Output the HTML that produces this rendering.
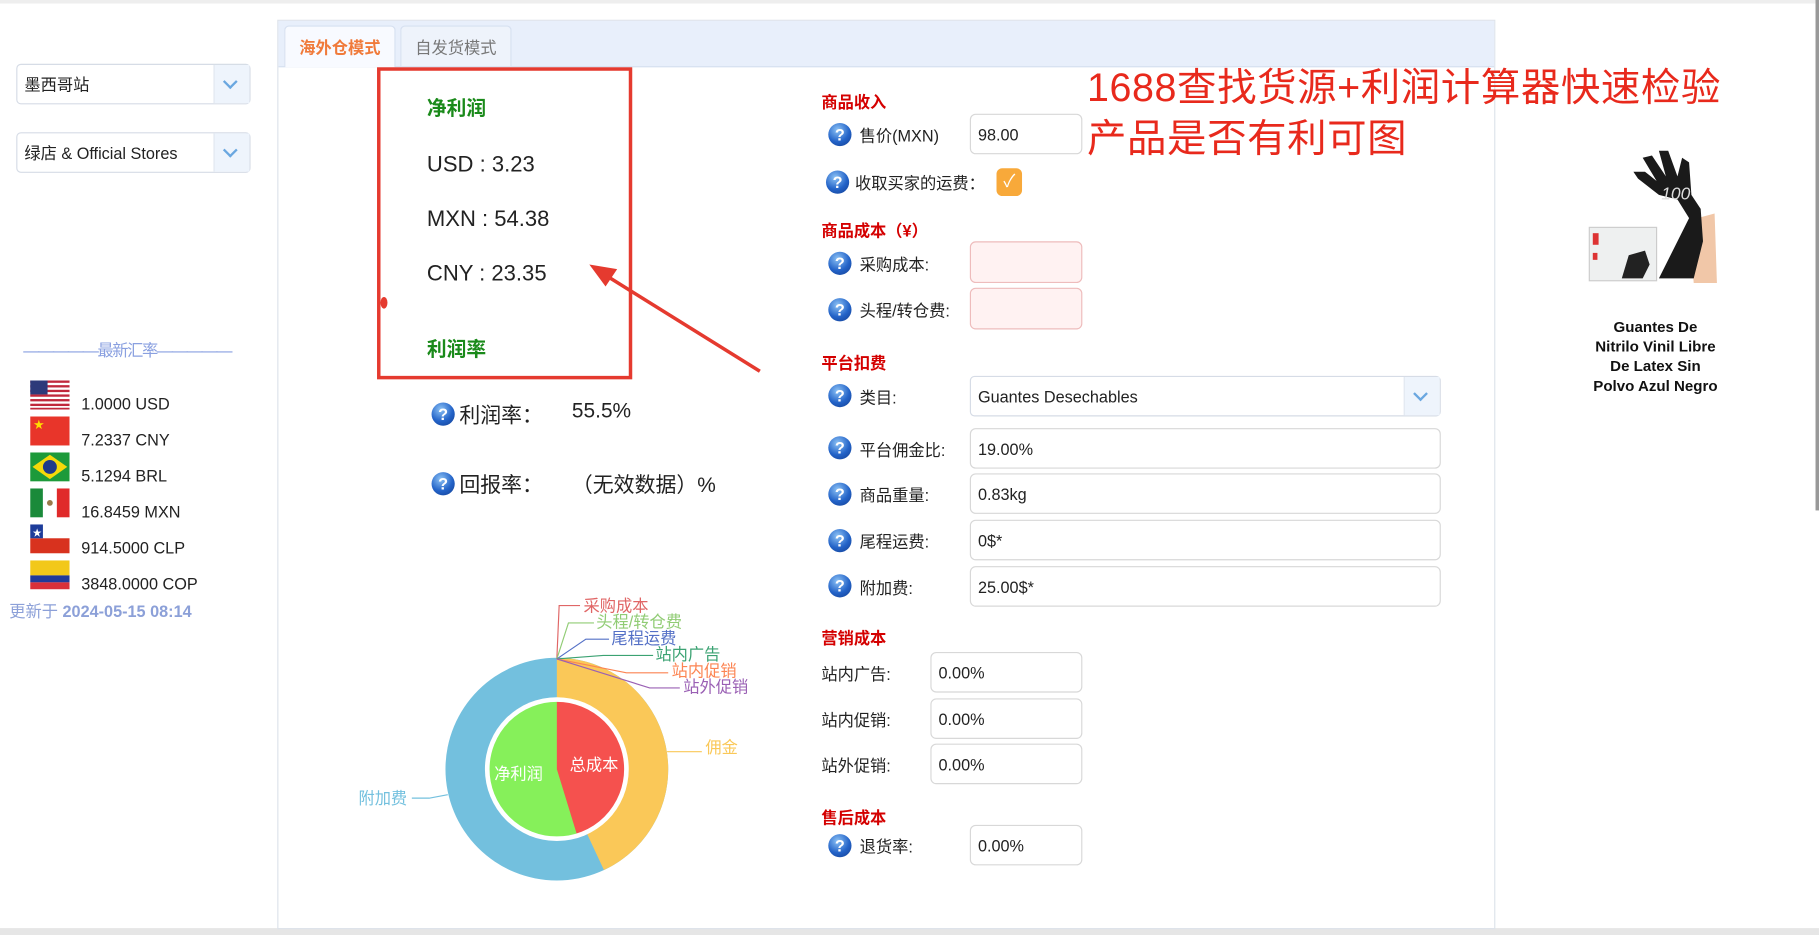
<!DOCTYPE html>
<html><head><meta charset="utf-8">
<style>
html,body{margin:0;padding:0;width:1819px;height:935px;overflow:hidden;background:#fff}
#w{position:absolute;left:0;top:0;width:1568px;height:806px;transform:scale(1.16008);transform-origin:0 0;font-family:"Liberation Sans","Noto Sans CJK SC",sans-serif;color:#222}
.a{position:absolute;white-space:nowrap}
.sel{position:absolute;border:1px solid #d6dce6;border-radius:4px;background:#fff;font-size:14px;box-sizing:border-box}
.sel .t{position:absolute;left:6px;top:50%;transform:translateY(-50%)}
.sel .b{position:absolute;right:0;top:0;bottom:0;width:30px;background:#eef4fc;border-left:1px solid #e2e8f0}
.sel .b:after{content:"";position:absolute;left:9px;top:10px;width:7px;height:7px;border-right:2px solid #6aa7e0;border-bottom:2px solid #6aa7e0;transform:rotate(45deg)}
.inp{position:absolute;border:1px solid #d8d8d8;border-radius:5px;background:#fff;box-sizing:border-box;font-size:14px;padding-left:6px;display:flex;align-items:center}
.pk{background:#fff2f2;border-color:#eebcbc}
.q{position:absolute;width:20px;height:20px;border-radius:50%;background:radial-gradient(circle at 40% 30%,#8cc2f5,#2363c8 55%,#123c8e);color:#fff;font:bold 14px/20px "Liberation Sans",sans-serif;text-align:center}
.h{position:absolute;color:#d40000;font-weight:bold;font-size:14px}
.l{position:absolute;font-size:14px}
.flag{position:absolute;left:26px;width:34px;height:25px}
.r{position:absolute;left:70px;font-size:14px;color:#222}
</style></head><body><div id="w">
<div class="a" style="left:0;top:0;width:1568px;height:3px;background:#eee"></div>
<div class="a" style="left:0;top:800px;width:1568px;height:6px;background:#e6e6e6"></div>
<div class="a" style="left:1565px;top:0;width:3px;height:440px;background:#999"></div>

<div class="sel" style="left:14px;top:55px;width:202px;height:35px"><span class="t">墨西哥站</span><span class="b"></span></div>
<div class="sel" style="left:14px;top:114px;width:202px;height:35px"><span class="t">绿店 &amp; Official Stores</span><span class="b"></span></div>

<div class="a" style="left:20px;top:292px;font-size:14px;color:#8aa0e0;letter-spacing:-1.2px">—————最新汇率—————</div>
<svg class="flag" style="top:328px" viewBox="0 0 34 25"><rect width="34" height="25" fill="#fff"/><g fill="#c0283c"><rect y="0" width="34" height="2"/><rect y="4" width="34" height="2"/><rect y="8" width="34" height="2"/><rect y="12" width="34" height="2"/><rect y="16" width="34" height="2"/><rect y="20" width="34" height="2"/><rect y="23.5" width="34" height="1.5"/></g><rect width="15" height="12" fill="#2d3a7a"/></svg>
<svg class="flag" style="top:359px" viewBox="0 0 34 25"><rect width="34" height="25" fill="#e8352a"/><text x="3" y="10" fill="#ffde00" font-size="9">★</text></svg>
<svg class="flag" style="top:390px" viewBox="0 0 34 25"><rect width="34" height="25" fill="#1d9a3a"/><polygon points="17,2 32,12.5 17,23 2,12.5" fill="#f5d90a"/><circle cx="17" cy="12.5" r="6" fill="#1f3a8a"/></svg>
<svg class="flag" style="top:421px" viewBox="0 0 34 25"><rect width="11" height="25" fill="#1a8a3a"/><rect x="11" width="12" height="25" fill="#fff"/><rect x="23" width="11" height="25" fill="#e02a2a"/><circle cx="17" cy="12.5" r="2.5" fill="#9a7a4a"/></svg>
<svg class="flag" style="top:452px" viewBox="0 0 34 25"><rect width="34" height="12" fill="#fff"/><rect y="12" width="34" height="13" fill="#d8321e"/><rect width="11" height="12" fill="#1d3c9a"/><text x="2" y="10" fill="#fff" font-size="8">★</text></svg>
<svg class="flag" style="top:483px" viewBox="0 0 34 25"><rect width="34" height="13" fill="#f2c81a"/><rect y="13" width="34" height="6" fill="#1f3a9a"/><rect y="19" width="34" height="6" fill="#d8303a"/></svg>
<div class="r" style="top:340px">1.0000 USD</div>
<div class="r" style="top:371px">7.2337 CNY</div>
<div class="r" style="top:402px">5.1294 BRL</div>
<div class="r" style="top:433px">16.8459 MXN</div>
<div class="r" style="top:464px">914.5000 CLP</div>
<div class="r" style="top:495px">3848.0000 COP</div>
<div class="a" style="left:8px;top:517px;font-size:14px;color:#8ca0d8">更新于 <b>2024-05-15 08:14</b></div>

<div class="a" style="left:239px;top:17px;width:1050px;height:784px;border:1px solid #dde3ea;box-sizing:border-box"></div>
<div class="a" style="left:240px;top:18px;width:1048px;height:39px;background:#e8effb;border-bottom:1px solid #d6e0f0"></div>
<div class="a" style="left:245px;top:22px;width:96px;height:36px;background:#f8faff;border:1px solid #d6e0f0;border-bottom:none;border-radius:4px 4px 0 0;box-sizing:border-box;color:#f07a3a;font-size:14px;font-weight:bold;text-align:center;line-height:36px">海外仓模式</div>
<div class="a" style="left:345px;top:22px;width:96px;height:35px;background:#eef3fb;border:1px solid #d6e0f0;border-bottom:none;border-radius:4px 4px 0 0;box-sizing:border-box;color:#777;font-size:14px;text-align:center;line-height:36px">自发货模式</div>

<div class="a" style="left:325px;top:58px;width:220px;height:269px;border:3px solid #e53a2f;box-sizing:border-box"></div>
<div class="a" style="left:368px;top:79px;font-size:17px;font-weight:bold;color:#1a8a1a">净利润</div>
<div class="a" style="left:368px;top:132px;font-size:19px">USD : 3.23</div>
<div class="a" style="left:368px;top:179px;font-size:19px">MXN : 54.38</div>
<div class="a" style="left:368px;top:226px;font-size:19px">CNY : 23.35</div>
<div class="a" style="left:368px;top:287px;font-size:17px;font-weight:bold;color:#1a8a1a">利润率</div>
<div class="a" style="left:328px;top:256px;width:6px;height:10px;border-radius:50%;background:#e53a2f"></div>
<svg class="a" style="left:0;top:0" width="1568" height="806"><line x1="655" y1="320" x2="520" y2="236" stroke="#e53a2f" stroke-width="3"/><polygon points="508,228 532,232 522,247" fill="#e53a2f"/></svg>

<div class="q" style="left:372px;top:347px">?</div><div class="a" style="left:396px;top:344px;font-size:18px">利润率：</div><div class="a" style="left:493px;top:344px;font-size:18px">55.5%</div>
<div class="q" style="left:372px;top:407px">?</div><div class="a" style="left:396px;top:404px;font-size:18px">回报率：</div><div class="a" style="left:493px;top:404px;font-size:18px">（无效数据）%</div>

<svg class="a" style="left:0;top:0" width="1568" height="806" font-family="Liberation Sans,Noto Sans CJK SC,sans-serif" font-size="14">
<circle cx="480" cy="663" r="96" fill="#73c0de"/>
<path d="M480,663 L480,567 A96,96 0 0 1 520.6,750 Z" fill="#fac858"/>
<circle cx="480" cy="663" r="62" fill="#fff"/>
<circle cx="480" cy="663" r="59" fill="#86f05a"/>
<path d="M480,663 L480,604 A59,59 0 0 1 497.3,719.4 Z" fill="#f5514e"/>
<circle cx="480" cy="663" r="59" fill="none" stroke="#fff" stroke-width="2"/>
<text x="491" y="664" fill="#fff">总成本</text><text x="426" y="672" fill="#fff">净利润</text>
<g fill="none" stroke-width="1">
<path d="M480,568 L482,522 L500,522" stroke="#e06666"/>
<path d="M480,568 L490,537 L512,537" stroke="#91cc75"/>
<path d="M480,568 L505,551 L525,551" stroke="#5470c6"/>
<path d="M480,568 L520,565 L563,565" stroke="#3ba272"/>
<path d="M480,568 L540,580 L576,580" stroke="#fc8452"/>
<path d="M480,568 L560,593 L586,593" stroke="#9a60b4"/>
<path d="M575,648 L590,648 L605,648" stroke="#fac858"/>
<path d="M386,685 L370,688 L355,688" stroke="#73c0de"/>
</g>
<text x="503" y="527" fill="#e06666">采购成本</text>
<text x="514" y="541" fill="#91cc75">头程/转仓费</text>
<text x="527" y="555" fill="#5470c6">尾程运费</text>
<text x="565" y="569" fill="#3ba272">站内广告</text>
<text x="579" y="583" fill="#fc8452">站内促销</text>
<text x="589" y="597" fill="#9a60b4">站外促销</text>
<text x="608" y="649" fill="#fac858">佣金</text>
<text x="309" y="693" fill="#73c0de">附加费</text>
</svg>

<div class="h" style="left:708px;top:78px">商品收入</div>
<div class="q" style="left:714px;top:106px">?</div><div class="l" style="left:741px;top:107px">售价(MXN)</div>
<div class="inp" style="left:836px;top:98px;width:97px;height:35px">98.00</div>
<div class="q" style="left:712px;top:147px">?</div><div class="l" style="left:737px;top:148px">收取买家的运费：</div>
<div class="a" style="left:859px;top:145px;width:22px;height:24px;border-radius:5px;background:#f8a93a;color:#fff;font-size:15px;text-align:center;line-height:24px">✓</div>
<div class="h" style="left:708px;top:189px">商品成本（¥）</div>
<div class="q" style="left:714px;top:217px">?</div><div class="l" style="left:741px;top:218px">采购成本:</div>
<div class="inp pk" style="left:836px;top:208px;width:97px;height:36px"></div>
<div class="q" style="left:714px;top:257px">?</div><div class="l" style="left:741px;top:258px">头程/转仓费:</div>
<div class="inp pk" style="left:836px;top:248px;width:97px;height:36px"></div>
<div class="h" style="left:708px;top:303px">平台扣费</div>
<div class="q" style="left:714px;top:331px">?</div><div class="l" style="left:741px;top:333px">类目:</div>
<div class="sel" style="left:836px;top:324px;width:406px;height:35px"><span class="t">Guantes Desechables</span><span class="b"></span></div>
<div class="q" style="left:714px;top:376px">?</div><div class="l" style="left:741px;top:378px">平台佣金比:</div>
<div class="inp" style="left:836px;top:369px;width:406px;height:35px">19.00%</div>
<div class="q" style="left:714px;top:416px">?</div><div class="l" style="left:741px;top:417px">商品重量:</div>
<div class="inp" style="left:836px;top:408px;width:406px;height:35px">0.83kg</div>
<div class="q" style="left:714px;top:456px">?</div><div class="l" style="left:741px;top:457px">尾程运费:</div>
<div class="inp" style="left:836px;top:448px;width:406px;height:35px">0$*</div>
<div class="q" style="left:714px;top:495px">?</div><div class="l" style="left:741px;top:497px">附加费:</div>
<div class="inp" style="left:836px;top:488px;width:406px;height:35px">25.00$*</div>
<div class="h" style="left:708px;top:540px">营销成本</div>
<div class="l" style="left:708px;top:571px">站内广告:</div><div class="inp" style="left:802px;top:562px;width:131px;height:35px">0.00%</div>
<div class="l" style="left:708px;top:611px">站内促销:</div><div class="inp" style="left:802px;top:602px;width:131px;height:35px">0.00%</div>
<div class="l" style="left:708px;top:650px">站外促销:</div><div class="inp" style="left:802px;top:641px;width:131px;height:35px">0.00%</div>
<div class="h" style="left:708px;top:695px">售后成本</div>
<div class="q" style="left:714px;top:719px">?</div><div class="l" style="left:741px;top:720px">退货率:</div>
<div class="inp" style="left:836px;top:711px;width:97px;height:35px">0.00%</div>

<div class="a" style="left:937px;top:54px;font-size:34px;color:#e8291c;line-height:44px;letter-spacing:0.5px">1688查找货源+利润计算器快速检验<br>产品是否有利可图</div>

<svg class="a" style="left:1368px;top:128px" width="114" height="118" viewBox="0 0 114 118">
<path d="M88,62 L110,56 L112,116 L92,116 Z" fill="#f1c7a8"/>
<rect x="2" y="68" width="58" height="46" fill="#eef0f0" stroke="#ccc"/>
<rect x="5" y="73" width="5" height="10" fill="#d33"/><rect x="5" y="90" width="4" height="6" fill="#d33"/>
<path d="M30,112 L36,92 L50,88 L54,100 L48,112 Z" fill="#222"/>
<path d="M62,112 L88,60 L78,44 L62,40 L44,26 L40,20 L50,20 L60,28 L48,8 L56,6 L68,24 L62,2 L70,2 L78,24 L82,8 L88,12 L90,40 L98,52 L100,80 L92,112 Z" fill="#1a1a1a"/>
<text x="64" y="44" fill="#ddd" font-size="15" font-style="italic" font-family="Liberation Sans">100</text>
</svg>
<div class="a" style="left:1340px;top:273px;width:174px;text-align:center;font-size:13px;font-weight:bold;line-height:17px;white-space:normal;color:#111">Guantes De<br>Nitrilo Vinil Libre<br>De Latex Sin<br>Polvo Azul Negro</div>
</div></body></html>
